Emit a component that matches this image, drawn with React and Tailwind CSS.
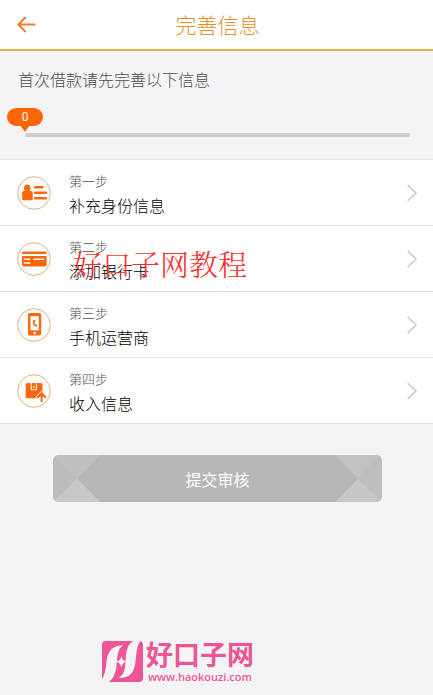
function IdCardIcon() {
  return (
    <svg viewBox="0 0 34 34" className="h-[34px] w-[34px] shrink-0" aria-hidden="true">
      <circle cx="17" cy="17" r="16.3" fill="#fff" stroke="#dfb27c" strokeWidth="1" />
      <path
        d="M10.2 8.600c2 0 3.300 1.500 3.300 3.400 0 1.200-.4 2.200-1 3h1.400c1.100 0 1.800.7 1.800 1.800v6.300c0 .8-.4 1.200-1.200 1.200H6.400c-.8 0-1.200-.4-1.200-1.200v-6.300c0-1.100.7-1.800 1.800-1.800h1c-.6-.8-1-1.800-1-3 0-1.900 1.200-3.400 3.200-3.400z"
        fill="#fb6709"
      />
      <path d="M18 11.200h7.500M18 16.700h11M18 22.200h11" stroke="#fb6709" strokeWidth="2.400" strokeLinecap="round" />
    </svg>
  );
}

function BankCardIcon() {
  return (
    <svg viewBox="0 0 34 34" className="h-[34px] w-[34px] shrink-0" aria-hidden="true">
      <circle cx="17" cy="17" r="16.3" fill="#fff" stroke="#dfb27c" strokeWidth="1" />
      <path d="M6.500 9.600h21.600a1.500 1.500 0 0 1 1.500 1.500v1H5v-1a1.500 1.500 0 0 1 1.500-1.500z" fill="#ee6a1a" />
      <path d="M5 14h24.600v9a1.500 1.500 0 0 1-1.500 1.500H6.500A1.500 1.500 0 0 1 5 23z" fill="#fb6709" />
      <path d="M6.800 17.300h6.400M6.800 21h6.400M16.500 17.300h10.600" stroke="#fff" strokeWidth="1.600" />
    </svg>
  );
}

function PhoneIcon() {
  return (
    <svg viewBox="0 0 34 34" className="h-[34px] w-[34px] shrink-0" aria-hidden="true">
      <circle cx="17" cy="17" r="16.3" fill="#fff" stroke="#dfb27c" strokeWidth="1" />
      <rect x="11" y="5" width="13.200" height="22.400" rx="1.800" fill="#fb6709" />
      <rect x="13.400" y="8.200" width="8.400" height="14.200" fill="#fff" />
      <circle cx="17.600" cy="25" r="1.200" fill="#fff" />
      <path
        d="M17.200 11.800l1 .3.200 1.700-.9.500c0 1 .3 1.700 1 2.400l.9-.2.800 1.200-.7 1c-2.300-.3-3.600-2-3.600-4.300 0-1.100.5-2 1.300-2.600z"
        fill="#fb6709"
      />
    </svg>
  );
}

function IncomeIcon() {
  return (
    <svg viewBox="0 0 34 34" className="h-[34px] w-[34px] shrink-0" aria-hidden="true">
      <circle cx="17" cy="17" r="16.3" fill="#fff" stroke="#dfb27c" strokeWidth="1" />
      <path d="M9.800 9h14.400l1.300 1.200v14H8.700v-14z" fill="#fb6709" />
      <path d="M14.200 8.500v7.300h5.200V8.500" fill="none" stroke="#fff" strokeWidth="1" />
      <path d="M16.800 12v2" stroke="#fff" strokeWidth="1.200" />
      <path d="M24.600 17.300l5.800 5.700-2 2-2.300-2.100v5.600h-3v-5.600L20.800 25l-2-2z" fill="#fb6709" stroke="#fff" strokeWidth="1" />
    </svg>
  );
}

const steps = [
  { step: "第一步", title: "补充身份信息", href: "#identity", Icon: IdCardIcon },
  { step: "第二步", title: "添加银行卡", href: "#bank-card", Icon: BankCardIcon },
  { step: "第三步", title: "手机运营商", href: "#carrier", Icon: PhoneIcon },
  { step: "第四步", title: "收入信息", href: "#income", Icon: IncomeIcon },
];

function StepRow({ step, title, href, Icon }) {
  return (
    <li className="border-b border-[#e3e3e5]">
      <a href={href} className="flex items-center pt-2 pr-4 pb-[7px] pl-[17px]">
        <Icon />
        <span className="ml-[18px] flex-1">
          <span className="block text-[13px] leading-[25px] text-[#505050]">{step}</span>
          <span className="block text-base leading-[25px] text-black">{title}</span>
        </span>
        <svg viewBox="0 0 10 18" className="h-[18px] w-[10px]" fill="none" aria-hidden="true">
          <path d="M0.700 1l8.300 8-8.300 8" stroke="#c6c6c6" strokeWidth="1.400" />
        </svg>
      </a>
    </li>
  );
}

export default function App() {
  const progress = 0;

  return (
    <div className="min-h-screen bg-[#f4f4f5] font-['Noto_Sans_CJK_SC',sans-serif] font-light">
      {/* Title bar */}
      <header className="grid grid-cols-[50px_1fr_48px] items-center border-b-2 border-[#dfb054] bg-white">
        <button type="button" aria-label="返回" className="flex h-12 items-center pl-[17px]">
          <svg viewBox="0 0 19 17" className="h-[17px] w-[19px]" fill="none" aria-hidden="true">
            <path d="M18.300 8.500H1.500M8.700 1L1.200 8.500l7.500 7.500" stroke="#f37a22" strokeWidth="1.800" />
          </svg>
        </button>
        <h1 className="py-2 text-center text-[21px] leading-[33px] text-[#e38f2b]">完善信息</h1>
      </header>

      {/* Progress */}
      <section className="bg-[#f4f4f7] pt-4 pb-[22px]">
        <p className="px-[18px] text-base leading-[25px] text-[#4c4c4c]">首次借款请先完善以下信息</p>
        <div className="mt-4 mr-[23px] ml-[25px]">
          <div
            className="relative flex h-[18px] w-9 -translate-x-1/2 items-center justify-center rounded-full bg-[#fc6605] font-['Roboto',sans-serif] text-xs font-normal text-white"
            style={{ marginLeft: `${progress}%` }}
          >
            {progress}
            <svg viewBox="0 0 10 7" className="absolute top-full left-1/2 -mt-px h-[7px] w-[10px] -translate-x-1/2" aria-hidden="true">
              <path d="M0 0h10L5 7z" fill="#fc6605" />
            </svg>
          </div>
          <progress
            value={progress}
            max="100"
            aria-label="资料完成进度"
            className="mt-[7px] block h-1 w-full appearance-none overflow-hidden rounded-full [&::-webkit-progress-bar]:bg-[#cccbd0] [&::-webkit-progress-value]:bg-[#fc6605]"
          />
        </div>
      </section>

      {/* Steps */}
      <div className="relative">
        <ul className="border-t border-[#e3e3e5] bg-white">
          {steps.map((item) => (
            <StepRow key={item.href} {...item} />
          ))}
        </ul>
        <div className="pointer-events-none absolute top-[85px] left-[73px] font-['Noto_Serif_CJK_SC','Noto_Sans_CJK_SC',serif] text-[29px] leading-10 whitespace-nowrap text-[#f92f2f]">
          好口子网教程
        </div>
      </div>

      <div className="pt-[31px] pr-[51px] pl-[53px]">
        <button type="button" className="relative block h-[47px] w-full overflow-hidden rounded-md bg-[#b7b7b7] text-base font-normal text-white">
          <svg viewBox="0 0 47 47" className="absolute top-0 left-0 h-full" aria-hidden="true">
            <path d="M0 0v47l24-23.500z" fill="#bcbcbc" />
            <path d="M0 0h47L24 23.500z" fill="#c0c0c0" />
            <path d="M0 47h47L24 23.500z" fill="#c8c8c8" />
          </svg>
          <svg viewBox="0 0 47 47" className="absolute top-0 right-0 h-full" aria-hidden="true">
            <path d="M47 0v47L23 23.500z" fill="#bebebe" />
            <path d="M0 0h47L23 23.500z" fill="#c1c1c1" />
            <path d="M0 47h47L23 23.500z" fill="#c9c6c9" />
          </svg>
          <span className="relative">提交审核</span>
        </button>
      </div>

      {/* Site logo */}
      <footer className="mt-[136px] flex items-center justify-center pr-[77px] text-[#ec5596]">
        <svg viewBox="37 43 122 122" className="h-[41px] w-[41px]" aria-hidden="true">
          <rect x="37" y="43" width="122" height="122" rx="11" fill="currentColor" />
          <path d="M101 56C70 56 55 72 51 100C48 125 47 140 36 158V166H56C70 156 77 142 80 118C83 90 82 66 101 56z" fill="#f4f4f5" />
          <path d="M86 153C104 143 105 128 107 104C109 72 112 52 132 42H152C141 56 140 76 137 102C133 138 122 153 86 153z" fill="#f4f4f5" />
          <path d="M95 88C97 98 100 102 109 105C100 108 97 112 95 121C93 112 89 108 79 105C89 102 93 98 95 88z" fill="#f4f4f5" />
        </svg>
        <div className="ml-[3px]">
          <div className="text-[27px] leading-8 font-bold">好口子网</div>
          <div className="px-[2px] font-['Open_Sans',sans-serif] text-[11px] leading-[14px] font-semibold">www.haokouzi.com</div>
        </div>
      </footer>
    </div>
  );
}
